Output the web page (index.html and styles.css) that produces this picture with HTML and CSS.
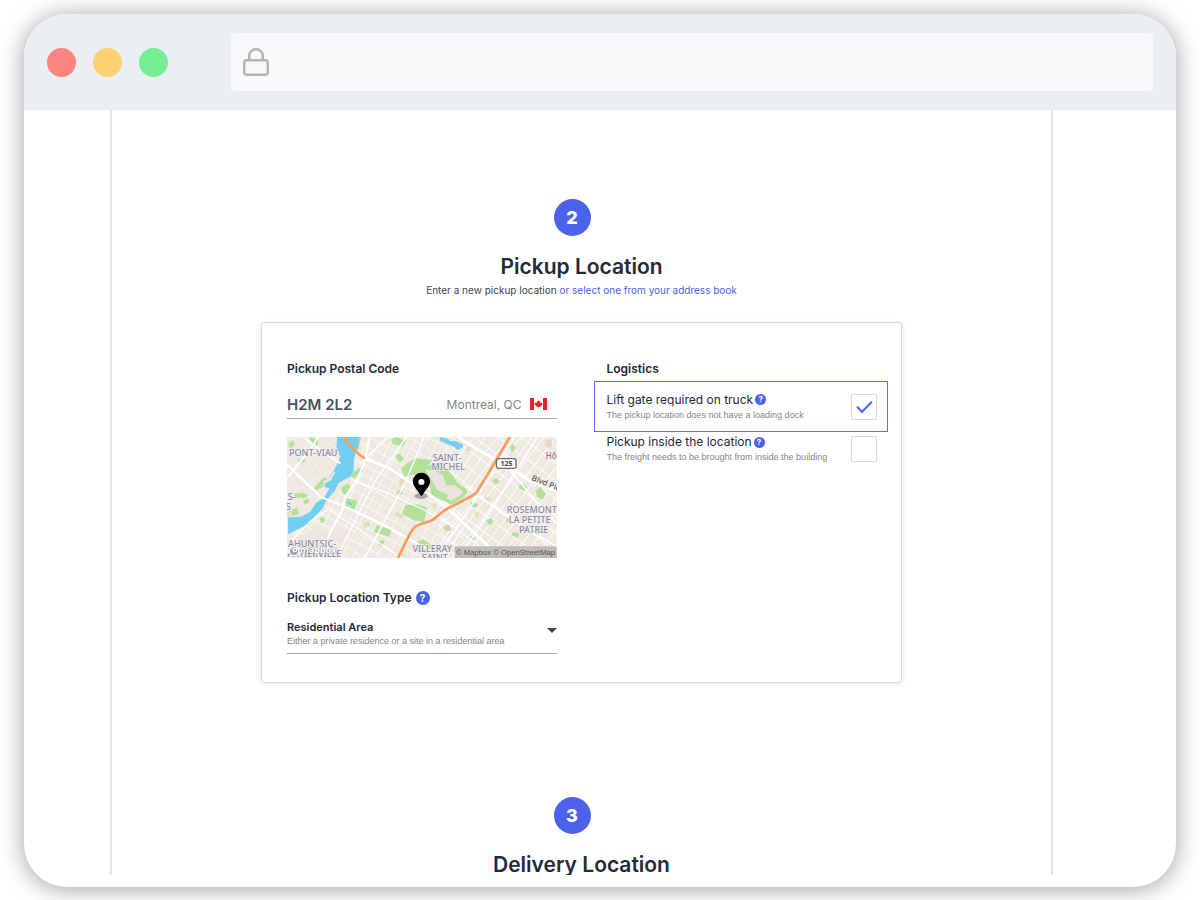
FILE: index.html
```html
<!DOCTYPE html>
<html lang="en">
<head>
<meta charset="utf-8">
<meta name="viewport" content="width=device-width, initial-scale=1">
<title>Pickup Location</title>
<link rel="stylesheet" href="styles.css">
</head>
<body>
<div class="window">
  <header class="toolbar">
    <div class="lights"><span class="light red"></span><span class="light amber"></span><span class="light green"></span></div>
    <div class="address">
      <svg class="lock" viewBox="0 0 26 28" fill="none" stroke="#b3b3b3" stroke-width="2.400" aria-hidden="true">
        <rect x="1.200" y="12.200" width="23.600" height="14.600" rx="2.500"/>
        <path d="M6.200 12V7.500a6.800 6.300 0 0 1 13.600 0V12"/>
      </svg>
    </div>
  </header>
  <main class="page">
    <section class="step">
      <div class="badge-row"><span class="badge">2</span></div>
      <h1 class="title">Pickup Location</h1>
      <p class="subtitle">Enter a new pickup location <a href="#book">or select one from your address book</a></p>
      <form class="card">
        <div class="column">
          <label class="label" for="postal">Pickup Postal Code</label>
          <div class="postal">
            <input class="postal-input" id="postal" type="text" value="H2M 2L2">
            <span class="city">Montreal, QC</span>
            <svg class="flag" viewBox="0 0 34 24" aria-hidden="true">
              <path fill="#fff" d="M0 0h34v24H0z"/>
              <path fill="#e3202b" d="M0 0h8v24H0zM26 0h8v24h-8zM17 4l1.500 3 2-1-.8 4.500 2.600-2 .7 1.600 2-.2-.8 2.500 1 .8-4.700 3.600.4 1.200-3.400-.4V21h-1v-3.400l-3.400.4.4-1.200-4.700-3.600 1-.8-.8-2.500 2 .2.700-1.600 2.600 2L13.500 6l2 1z"/>
            </svg>
          </div>
          <svg class="map" viewBox="21 21 810 363" preserveAspectRatio="xMidYMid slice" role="img" aria-label="Map of Montreal">
            <defs>
              <pattern id="streets" width="31" height="54" patternUnits="userSpaceOnUse" patternTransform="rotate(28)">
                <path d="M0 1h31M1 0v54M0 28h31" stroke="#fbf9f7" stroke-width="3" fill="none"/>
                <path d="M16 0v54" stroke="#f5f1ed" stroke-width="2"/>
              </pattern>
              <pattern id="streetsEast" width="28" height="42" patternUnits="userSpaceOnUse" patternTransform="rotate(37)">
                <path d="M0 1h28M1 0v42" stroke="#fdfcfb" stroke-width="4" fill="none"/>
                <path d="M14 0v42" stroke="#f5f1ed" stroke-width="2"/>
              </pattern>
              <pattern id="streetsWest" width="13" height="36" patternUnits="userSpaceOnUse" patternTransform="rotate(-30)">
                <path d="M0 1h13M1 0v36" stroke="#f7f4f1" stroke-width="2" fill="none"/>
              </pattern>
            </defs>
            <path fill="#eee8e0" d="M21 21h810v363H21z"/>
            <path fill="url(#streetsWest)" d="M21 21h170L130 210 21 262z"/>
            <path fill="url(#streets)" d="M235 21h270l60 384H21v-90l110-80 80-90z"/>
            <path fill="url(#streetsEast)" d="M500 21h331v363H470z"/>
            <path fill="#ede5df" d="M64 320l45-28 40 14-5 42-70 20zM160 285l45 22-20 36-38-14z"/>
            <g fill="#b2e299">
              <path d="M88 22l28 4-3 22-16-4zM26 40l14-8 5 13-15 10zM52 90l20-6 6 10-20 8zM42 192l30-4 14 8-12 8-28-2zM33 240l18-7 8 18-22 8zM105 170l28-28 12 6-20 26-20 8zM70 212l16-8 3 12-14 8zM120 265l13-4 2 14-12 4z"/>
              <path d="M234 22h10l-8 36-8 12-6-8zM218 130l20-16 14 8-26 22-12-2zM186 172l20-12 6 10-14 26-12-8zM201 204l32 8-8 28-29-12zM292 286l44 14-8 20-46-14z"/>
              <path d="M334 28l16-7 28 12-8 16-32-8zM346 78l14-8 12 16-12 12zM364 114l40-29 54 4-20 24 30 20 18 42 24 19-20 18-34-14-8-52-50-12-24 7zM350 186l12-8 8 12-14 8zM376 226l40-3 26 10-9 43-31-5-34-20zM298 332l18-2-8 20-13-5zM410 336l20-8 24 16-10 28-34-10z"/>
              <path d="M482 96l23 28 29 40-17 18-34-14-13-28-35-30z"/>
              <path d="M480 21l28 7-4 11-26-5zM688 48l14-6 6 14-12 12zM636 150l12-6 12 10-12 10zM720 160l22 10-8 14-18-10zM768 182l14-11 16 20-10 18-17-10zM572 215l22 6-4 12-20-6zM620 270l16-6 6 14-16 8zM490 290l16-5 10 15-18 4zM680 262l12-3 2 14-14 3zM700 306l18 3-5 14-19-8zM570 320l12-4 4 10-14 5zM768 296l16 4-10 14-14-8z"/>
            </g>
            <g fill="#e7dfba">
              <path d="M354 158l17-18 8 12-14 17zM347 244l26 11-4 12-24-10zM249 278l20-4 4 14-20 5zM560 50l15 2-5 14-13-5zM615 200l18 2 2 12-20 4zM460 218l13 4-4 12-12-6zM350 366l30 5-8 10-24-7zM588 244l12 8-7 12-10-8z"/>
              <path d="M18 250l18-16 2 14-12 14z"/>
            </g>
            <path fill="#ede3dc" d="M436 118l30 4 24 14 10 32 34-4 28 19-14 8 12 17-26 19-20-11-12-23-30-13-16-30z"/>
            <path fill="none" stroke="#b2e299" stroke-width="11" stroke-linejoin="round" d="M482 100l24 30 28 36 24 18-10 14-34 20-24-14"/>
            <path fill="#ead6ce" d="M800 26l18 6-4 24-20-8z"/>
            <path fill="#73cff1" d="M172 21h66l-2 29-8 12-6 30v32l-10 16-20 10-16 10-11 22-26 30-10 23-22 22-20 25-30 14-32 17v-51l38-2 28-14 18-27 26-18 14-26-15-4 4-14 26-38 18-38-12-30z"/>
            <path fill="#eee8e0" d="M163 123l4 4-14 24-20 11-2-8 20-12z"/>
            <path fill="#73cff1" d="M482 22l20 4 8 7 22 1 19 11-3 9-15 5-12-10-18-6-22-13zM203 215l11 1 3 9-11-2z"/>
            <g fill="none" stroke="#fff" stroke-linejoin="round">
              <path stroke-width="6" d="M70 21l32 25 80 54M21 102l102 99 77 31 110 51 150 84M270 21l-17 80-24 54-32 45-10 40-42 80-27 64M21 145l76-94 18-30"/>
              <path stroke-width="4" d="M222 152l106 39 100 46 100 56M150 240l90 60 125 84M240 102l84-81M255 384l118-218 60-145M180 365l105-210 95-134M21 348l70-74 60-40"/>
              <path stroke-width="8" d="M255 85l75 31 90 60 55 35 48 42 57 53 80 75"/>
              <path stroke-width="8" d="M535 21l54 35 50 28 62 35 48 33 82 32"/>
              <path stroke-width="5" d="M466 384l70-97 90-139 78-127M535 384l98-142 108-170 32-51M690 120l100 120 41 40M560 170l150 110 121 70"/>
            </g>
            <g fill="none" stroke="#fd9b5a" stroke-width="8" stroke-linejoin="round">
              <path d="M190 21q34 46 65 64M355 384l31-64q16-30 28-34l44-15 37-31 60-31q32-15 38-26l29-47 68-115"/>
            </g>
            <g class="map-label">
              <text x="28" y="78">PONT-VIAU</text><text x="459" y="94">SAINT-</text><text x="455" y="121">MICHEL</text>
              <text x="24" y="209">S-</text><text x="18" y="241">S</text>
              <text x="681" y="249">ROSEMONT</text><text x="687" y="279">LA PETITE</text><text x="718" y="310">PATRIE</text>
              <text x="25" y="350">AHUNTSIC-</text><text x="23" y="380">ARTIERVILLE</text><text x="398" y="366">VILLERAY</text><text x="426" y="394">SAINT-</text>
            </g>
            <text class="map-label hospital" x="798" y="88">Hô</text>
            <text class="map-label road" transform="translate(754 150) rotate(22)">Blvd Pie</text>
            <rect x="650" y="86" width="59" height="29" rx="7" fill="#fff" stroke="#6d6d6d" stroke-width="4"/>
            <text class="shield" x="680" y="109">125</text>
            <ellipse cx="424" cy="198" rx="20" ry="9" fill="#555" opacity=".45"/>
            <path d="M425 199l-20-28a26 26 0 1 1 40 0z"/><circle cx="425" cy="156" r="9" fill="#fff"/>
            <g fill="none" stroke="#fff" stroke-width="4"><circle cx="43" cy="363" r="14" fill="#888" fill-opacity=".55"/><circle cx="46" cy="360" r="5"/></g>
            <text class="logo-text" x="61" y="370">mapbox</text>
            <path fill="#b5b4af" fill-opacity=".85" d="M525 349h306v35H525z"/>
            <text class="credit" x="529" y="375">© Mapbox © OpenStreetMap</text>
          </svg>
          <div class="label type-label"><label for="type">Pickup Location Type</label><button class="help large" type="button" aria-label="About location types">?</button></div>
          <div class="type">
            <select class="type-select" id="type"><option>Residential Area</option></select>
            <p class="hint">Either a private residence or a site in a residential area</p>
            <svg class="caret" viewBox="0 0 10 5" aria-hidden="true"><path fill="#3d434d" d="M0 0h10L5 5z"/></svg>
          </div>
        </div>
        <div class="column">
          <h2 class="label">Logistics</h2>
          <div class="option active">
            <div class="option-text">
              <div class="option-name"><label for="lift">Lift gate required on truck</label><button class="help" type="button" aria-label="About lift gates">?</button></div>
              <p class="hint">The pickup location does not have a loading dock</p>
            </div>
            <input class="check" id="lift" type="checkbox" checked>
          </div>
          <div class="option">
            <div class="option-text">
              <div class="option-name"><label for="inside">Pickup inside the location</label><button class="help" type="button" aria-label="About inside pickup">?</button></div>
              <p class="hint">The freight needs to be brought from inside the building</p>
            </div>
            <input class="check" id="inside" type="checkbox">
          </div>
        </div>
      </form>
    </section>
    <section class="step">
      <div class="badge-row"><span class="badge">3</span></div>
      <h1 class="title">Delivery Location</h1>
    </section>
  </main>
</div>
</body>
</html>
```
FILE: styles.css
```css
* { box-sizing: border-box; }
body {
  margin: 0;
  height: 100vh;
  padding: 14px 24px 13px;
  overflow: hidden;
  background: #fff;
  color: #22293a;
  font-family: Inter, "Liberation Sans", sans-serif;
}
h1, h2, p { margin: 0; }
button, input, select { font: inherit; color: inherit; }
.window {
  display: flex;
  flex-direction: column;
  height: 100%;
  padding-bottom: 12px;
  overflow: hidden;
  border-radius: 43px;
  background: #fff;
  box-shadow: 0 2px 24px rgba(0, 0, 0, .38);
}
.toolbar {
  display: flex;
  flex: none;
  align-items: center;
  gap: 63px;
  height: 96px;
  padding: 0 23px;
  background: #e9eff2;
}
.lights { display: flex; gap: 17px; }
.light { width: 29px; height: 29px; border-radius: 50%; }
.red { background: #ff8583; }
.amber { background: #ffd072; }
.green { background: #76ef94; }
.address {
  display: flex;
  flex: 1;
  align-items: center;
  height: 58px;
  padding-left: 12px;
  border-radius: 3px;
  background: #f7f9fb;
}
.lock { width: 26px; height: 28px; }
.page {
  display: flex;
  flex: 1;
  flex-direction: column;
  gap: 114px;
  min-height: 0;
  margin: 0 123px 0 86px;
  padding-top: 89px;
  overflow: hidden;
  border: solid #e4e4e4;
  border-width: 0 2px;
}
.step { display: flex; flex: none; flex-direction: column; align-items: center; }
.badge-row { padding-right: 19px; }
.badge {
  display: grid;
  place-items: center;
  width: 37px;
  height: 37px;
  border-radius: 50%;
  background: #4c62eb;
  color: #fff;
  font-size: 18px;
  font-weight: 800;
}
.title { margin-top: 17px; font-size: 21px; font-weight: 600; line-height: 28px; }
.subtitle { color: #3c424d; font-size: 10px; line-height: 18px; }
.subtitle a { color: #4c5eea; text-decoration: none; }
.card {
  display: grid;
  grid-template-columns: 1fr 1fr;
  gap: 50px;
  width: 100%;
  max-width: 641px;
  margin-top: 23px;
  padding: 37px 25px 28px;
  border: 1px solid #dadada;
  border-radius: 3px;
  box-shadow: 0 1px 5px rgba(0, 0, 0, .1);
}
.column { display: flex; flex-direction: column; min-width: 0; }
.label { font-size: 12px; font-weight: 600; line-height: 18px; }
.postal {
  display: flex;
  align-items: center;
  height: 29px;
  margin-top: 12px;
  padding-right: 10px;
  border-bottom: 1px solid #a9a9a9;
}
.postal-input {
  flex: 1;
  min-width: 0;
  padding: 0;
  border: 0;
  background: none;
  color: #4b515c;
  font-size: 15px;
  font-weight: 600;
}
.city { color: #858585; font-size: 12px; }
.flag { width: 17px; height: 12px; margin-left: 8px; }
.map { display: block; width: 100%; height: 121px; margin-top: 18px; }
.map-label {
  fill: #8789ab;
  stroke: #f5f1ee;
  stroke-width: 4px;
  paint-order: stroke;
  font-family: "Noto Sans", sans-serif;
  font-size: 27px;
  font-weight: 500;
}
.hospital { fill: #a06a7c; font-size: 24px; }
.road { fill: #555; font-size: 24px; }
.shield { fill: #444; font: 700 21px "Noto Sans", sans-serif; text-anchor: middle; }
.logo-text { fill: #fff; stroke: #777; stroke-width: 2px; paint-order: stroke; font: 700 27px "Noto Sans", sans-serif; }
.credit { fill: #555; font: 23px "Liberation Sans", sans-serif; }
.type-label { display: flex; align-items: center; gap: 4px; margin-top: 31px; }
.help {
  display: grid;
  place-items: center;
  width: 11px;
  height: 11px;
  padding: 0;
  border: 0;
  border-radius: 50%;
  background: #4c62eb;
  color: #fff;
  font-size: 8px;
  font-weight: 700;
  line-height: 11px;
}
.large { width: 14px; height: 14px; font-size: 10px; line-height: 14px; }
.type { position: relative; margin-top: 13px; padding-bottom: 5px; border-bottom: 1px solid #a9a9a9; }
.type-select {
  display: block;
  width: 100%;
  height: 14px;
  padding: 0;
  border: 0;
  appearance: none;
  background: none;
  font-size: 11px;
  font-weight: 600;
  line-height: 14px;
}
.caret { position: absolute; top: 8px; right: 0; width: 10px; height: 5px; pointer-events: none; }
.hint { color: #858585; font-family: "Liberation Sans", sans-serif; font-size: 9px; line-height: 14px; white-space: nowrap; }
.option { display: flex; align-items: center; margin: 0 -12px 0 -13px; padding: 2px 11px 0 13px; }
.active { height: 51px; margin-top: 3px; padding: 0 10px 0 12px; border: 1px solid #5f6fec; }
.option-text { flex: 1; min-width: 0; }
.option-name { display: flex; align-items: center; gap: 2px; font-size: 12px; line-height: 16px; white-space: nowrap; }
.check {
  display: grid;
  place-items: center;
  flex: none;
  width: 26px;
  height: 26px;
  margin: 0;
  border: 1px solid #d9d9d9;
  appearance: none;
  background: #fff;
}
.check:checked::after {
  content: "";
  width: 13px;
  height: 6px;
  margin-bottom: 3px;
  border: solid #4c62eb;
  border-width: 0 0 2px 2px;
  transform: rotate(-45deg);
}
```
